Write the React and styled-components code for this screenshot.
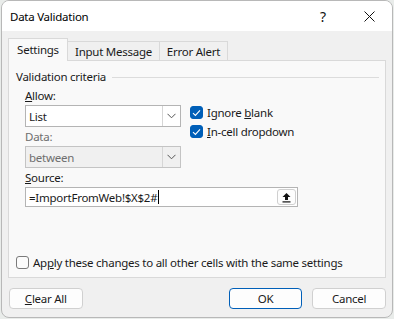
import React from 'react';
import styled, { createGlobalStyle } from 'styled-components';

const GlobalStyle = createGlobalStyle`
  body {
    margin: 0;
    background: #e9ecea;
    font-family: "Segoe UI", "Noto Sans", "Liberation Sans", sans-serif;
    font-size: 11.5px;
    letter-spacing: -0.25px;
    color: #1a1a1a;
  }
`;

const Window = styled.div`
  box-sizing: border-box;
  margin-left: 1px;
  width: 392px;
  height: 318px;
  border: 1px solid #b8b8b8;
  border-radius: 8px;
  overflow: hidden;
  background: #f0f0f0;
  display: flex;
  flex-direction: column;
`;

const TitleBar = styled.div`
  height: 30px;
  background: #ffffff;
  display: flex;
  align-items: center;
  padding-left: 8px;
  flex-shrink: 0;
`;

const Title = styled.div`
  flex: 1;
  color: #000;
`;

const CaptionButton = styled.div`
  width: 46px;
  height: 30px;
  display: flex;
  align-items: center;
  justify-content: center;
  font-size: 14px;
  color: #111;
`;

const Body = styled.div`
  flex: 1;
  display: flex;
  flex-direction: column;
  padding: 7px 6px 0 6px;
`;

const TabRow = styled.div`
  display: flex;
  align-items: flex-end;
  height: 23px;
  position: relative;
  z-index: 1;
  margin-bottom: -1px;
`;

const Tab = styled.div`
  box-sizing: border-box;
  width: ${p => p.$w}px;
  height: ${p => (p.$active ? 23 : 20)}px;
  display: flex;
  align-items: center;
  justify-content: center;
  border: 1px solid #d9d9d9;
  border-bottom: ${p => (p.$active ? 'none' : '1px solid #d9d9d9')};
  border-left: ${p => (p.$first || p.$active ? '1px solid #d9d9d9' : 'none')};
  background: ${p => (p.$active ? '#f9f9f9' : '#f0f0f0')};
  color: #1a1a1a;
  padding-bottom: ${p => (p.$active ? 2 : 0)}px;
`;

const Panel = styled.div`
  box-sizing: border-box;
  height: 218px;
  border: 1px solid #d9d9d9;
  background: #f9f9f9;
  display: flex;
  flex-direction: column;
  padding: 8px 6px 7px 7px;
`;

const GroupHeading = styled.div`
  display: flex;
  align-items: center;
  line-height: 16px;
  gap: 6px;
  &::after {
    content: '';
    flex: 1;
    height: 1px;
    background: #dcdcdc;
  }
`;

const Criteria = styled.div`
  padding-left: 9px;
  display: flex;
  flex-direction: column;
`;

const TopArea = styled.div`
  display: flex;
  gap: 9px;
  margin-top: 3px;
`;

const LeftCol = styled.div`
  width: 156px;
  display: flex;
  flex-direction: column;
`;

const RightCol = styled.div`
  display: flex;
  flex-direction: column;
  gap: 2px;
  margin-top: 16px;
`;

const Label = styled.div`
  line-height: 16px;
  margin-top: ${p => p.$mt || 0}px;
  color: ${p => (p.$disabled ? '#6e6e6e' : '#1a1a1a')};
`;

const Combo = styled.div`
  box-sizing: border-box;
  height: 22px;
  margin-top: 1px;
  display: flex;
  border: 1px solid ${p => (p.$disabled ? '#c4c4c4' : '#b4b4b4')};
  background: ${p => (p.$disabled ? '#f0f0f0' : '#ffffff')};
  color: ${p => (p.$disabled ? '#6e6e6e' : '#1a1a1a')};
`;

const ComboText = styled.div`
  flex: 1;
  display: flex;
  align-items: center;
  padding-left: 3px;
`;

const ComboArrow = styled.div`
  width: 17px;
  border-left: 1px solid #d6d6d6;
  display: flex;
  align-items: center;
  justify-content: center;
`;

const CheckRow = styled.div`
  display: flex;
  align-items: center;
  height: 17px;
  gap: 4px;
`;

const Box = styled.div`
  box-sizing: border-box;
  width: 13px;
  height: 13px;
  border-radius: 3px;
  flex-shrink: 0;
  display: flex;
  align-items: center;
  justify-content: center;
  background: ${p => (p.$checked ? '#005fb8' : '#fbfbfb')};
  border: 1px solid ${p => (p.$checked ? '#005fb8' : '#7a7a7a')};
`;

const SourceInput = styled.div`
  box-sizing: border-box;
  width: 273px;
  height: 20px;
  margin-top: 1px;
  border: 1px solid #b4b4b4;
  background: #fff;
  display: flex;
  align-items: center;
  padding-left: 3px;
`;

const Caret = styled.span`
  display: inline-block;
  width: 1px;
  height: 14px;
  background: #000;
  margin-left: 1px;
`;

const RefButton = styled.div`
  box-sizing: border-box;
  margin-left: auto;
  margin-right: 1px;
  width: 19px;
  height: 16px;
  border: 1px solid #d0d0d0;
  border-radius: 3px;
  background: #fdfdfd;
  display: flex;
  align-items: center;
  justify-content: center;
`;

const ApplyRow = styled(CheckRow)`
  margin-top: auto;
  height: 16px;
`;

const ButtonRow = styled.div`
  display: flex;
  align-items: center;
  margin-top: 10px;
  padding-left: 1px;
`;

const Button = styled.div`
  box-sizing: border-box;
  width: 74px;
  height: 21px;
  border-radius: 4px;
  background: #fdfdfd;
  border: 1px solid ${p => (p.$primary ? '#005fb8' : '#d0d0d0')};
  display: flex;
  align-items: center;
  justify-content: center;
  margin-left: ${p => p.$ml || 0}px;
  color: #1a1a1a;
`;

const Chevron = () => (
  <svg width="9" height="6" viewBox="0 0 9 6">
    <path d="M0.5 0.8 L4.5 4.8 L8.5 0.8" fill="none" stroke="#555" strokeWidth="1" />
  </svg>
);

const Check = () => (
  <svg width="9" height="8" viewBox="0 0 9 8">
    <path d="M1 4.2 L3.4 6.4 L8 1.4" fill="none" stroke="#fff" strokeWidth="1.1" />
  </svg>
);

const App = () => {
  return (
    <>
      <GlobalStyle />
      <Window>
        <TitleBar>
          <Title>Data Validation</Title>
          <CaptionButton>?</CaptionButton>
          <CaptionButton>
            <svg width="11" height="11" viewBox="0 0 11 11">
              <path d="M0.5 0.5 L10.5 10.5 M10.5 0.5 L0.5 10.5" stroke="#111" strokeWidth="1" />
            </svg>
          </CaptionButton>
        </TitleBar>
        <Body>
          <TabRow>
            <Tab $w={60} $active $first>Settings</Tab>
            <Tab $w={92}>Input Message</Tab>
            <Tab $w={68}>Error Alert</Tab>
          </TabRow>
          <Panel>
            <GroupHeading>Validation criteria</GroupHeading>
            <Criteria>
              <TopArea>
                <LeftCol>
                  <Label><u>A</u>llow:</Label>
                  <Combo>
                    <ComboText>List</ComboText>
                    <ComboArrow><Chevron /></ComboArrow>
                  </Combo>
                  <Label $mt={2} $disabled>Data:</Label>
                  <Combo $disabled>
                    <ComboText>between</ComboText>
                    <ComboArrow><Chevron /></ComboArrow>
                  </Combo>
                </LeftCol>
                <RightCol>
                  <CheckRow>
                    <Box $checked><Check /></Box>
                    <span>Ignore <u>b</u>lank</span>
                  </CheckRow>
                  <CheckRow>
                    <Box $checked><Check /></Box>
                    <span><u>I</u>n-cell dropdown</span>
                  </CheckRow>
                </RightCol>
              </TopArea>
              <Label $mt={2}><u>S</u>ource:</Label>
              <SourceInput>
                =ImportFromWeb!$X$2#<Caret />
                <RefButton>
                  <svg width="11" height="11" viewBox="0 0 11 11">
                    <path d="M5.5 1 L1.5 5 H4 V8 H7 V5 H9.5 Z" fill="#111" />
                    <rect x="1.5" y="9.3" width="8" height="1.2" fill="#111" />
                  </svg>
                </RefButton>
              </SourceInput>
            </Criteria>
            <ApplyRow>
              <Box />
              <span>Ap<u>p</u>ly these changes to all other cells with the same settings</span>
            </ApplyRow>
          </Panel>
          <ButtonRow>
            <Button><span><u>C</u>lear All</span></Button>
            <Button $primary $ml={146}>OK</Button>
            <Button $ml={10}>Cancel</Button>
          </ButtonRow>
        </Body>
      </Window>
    </>
  );
};

export default App;
